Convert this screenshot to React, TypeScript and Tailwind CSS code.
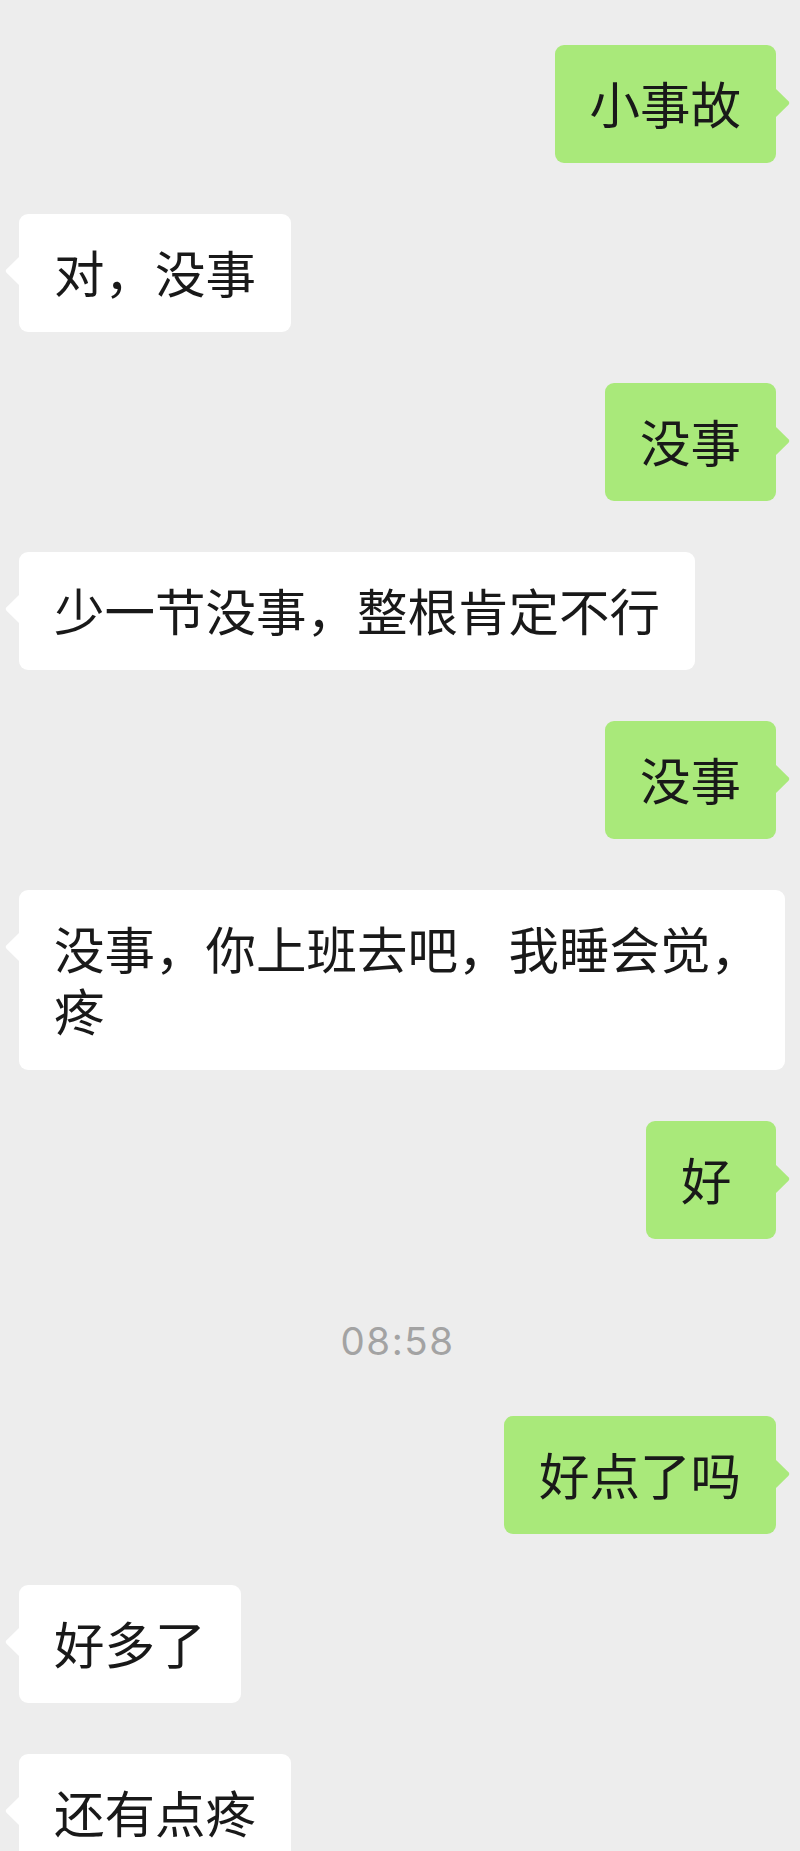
type Msg =
  | { kind: 'me' | 'other'; lines: string[]; wide?: boolean }
  | { kind: 'time'; text: string };

const messages: Msg[] = [
  { kind: 'me', lines: ['小事故'] },
  { kind: 'other', lines: ['对，没事'] },
  { kind: 'me', lines: ['没事'] },
  { kind: 'other', lines: ['少一节没事，整根肯定不行'] },
  { kind: 'me', lines: ['没事'] },
  { kind: 'other', lines: ['没事，你上班去吧，我睡会觉，', '疼'], wide: true },
  { kind: 'me', lines: ['好'] },
  { kind: 'time', text: '08:58' },
  { kind: 'me', lines: ['好点了吗'] },
  { kind: 'other', lines: ['好多了'] },
  { kind: 'other', lines: ['还有点疼'] },
];

function Tail({ side }: { side: 'me' | 'other' }) {
  // little pointer on the bubble edge
  if (side === 'me') {
    return (
      <svg
        width="16"
        height="30"
        viewBox="0 0 16 30"
        className="absolute left-[calc(100%-1px)] top-[43px] fill-[#a9e97a]"
      >
        <path d="M0 0 L13.5 13.2 Q15.3 15 13.5 16.8 L0 30 Z" />
      </svg>
    );
  }
  return (
    <svg
      width="16"
      height="30"
      viewBox="0 0 16 30"
      className="absolute right-[calc(100%-1px)] top-[42px] fill-white"
    >
      <path d="M16 0 L2.5 13.2 Q0.7 15 2.5 16.8 L16 30 Z" />
    </svg>
  );
}

function Bubble({ side, lines, wide }: { side: 'me' | 'other'; lines: string[]; wide?: boolean }) {
  return (
    <div className={`flex ${side === 'me' ? 'justify-end' : 'justify-start'}`}>
      <div
        className={`relative rounded-[9px] px-[35px] pt-[26px] pb-[30px] text-[50.5px] leading-[62px] text-[#191919] ${
          side === 'me' ? 'bg-[#a9e97a]' : 'bg-white'
        } ${wide ? 'w-[766px]' : 'min-w-[130px] max-w-[766px]'}`}
      >
        <p className="whitespace-nowrap">
          {lines.map((l, i) => (
            <span key={i}>
              {i > 0 && <br />}
              {l}
            </span>
          ))}
        </p>
        <Tail side={side} />
      </div>
    </div>
  );
}

export default function App() {
  return (
    <div
      className="h-[1851px] w-[800px] overflow-hidden bg-[#ededed]"
      style={{ fontFamily: '"Noto Sans CJK SC", "Noto Sans", sans-serif' }}
    >
      <div className="flex flex-col gap-[51px] pt-[45px] pl-[19px] pr-[24px]">
        {messages.map((m, i) =>
          m.kind === 'time' ? (
            <div
              key={i}
              className="flex h-[75px] items-center justify-center pt-[28px] font-['Inter',sans-serif] text-[38.5px] tracking-[1.5px] text-[#a3a3a3]"
            >
              {m.text}
            </div>
          ) : (
            <Bubble key={i} side={m.kind} lines={m.lines} wide={m.wide} />
          )
        )}
      </div>
    </div>
  );
}
